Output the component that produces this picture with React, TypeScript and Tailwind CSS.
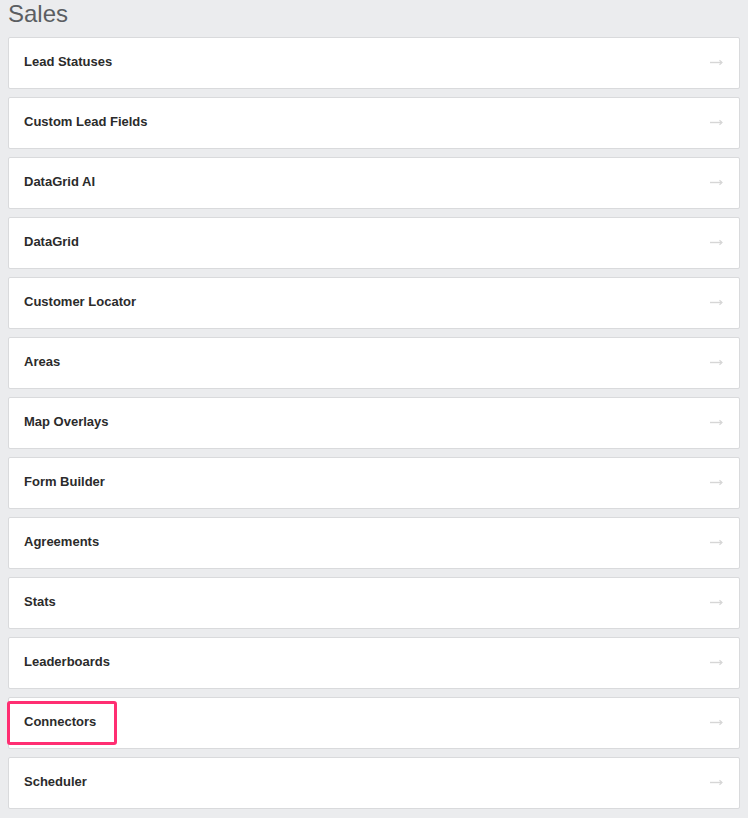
const items = [
  'Lead Statuses',
  'Custom Lead Fields',
  'DataGrid AI',
  'DataGrid',
  'Customer Locator',
  'Areas',
  'Map Overlays',
  'Form Builder',
  'Agreements',
  'Stats',
  'Leaderboards',
  'Connectors',
  'Scheduler',
]

const Arrow = () => (
  <svg width="13" height="7" viewBox="0 0 13 7" fill="none" className="text-[#d6d6d6]">
    <path d="M0 3.5H11.5" stroke="currentColor" strokeWidth="1.4" />
    <path d="M9.5 1.2L12 3.5L9.5 5.8" stroke="currentColor" strokeWidth="1.2" />
  </svg>
)

const App = () => {
  return (
    <div
      className="min-h-screen bg-[#ebecee] px-2 pb-2"
      style={{ fontFamily: '"Liberation Sans", Arial, sans-serif' }}
    >
      <h1 className="text-[24px] leading-[28px] text-[#5b5e62] mb-[9px]">Sales</h1>
      <div className="flex flex-col gap-2">
        {items.map((name) => (
          <div
            key={name}
            className="relative flex items-center justify-between h-[52px] bg-white border border-[#d9dadc] rounded-[2px] pl-[15px] pr-[16px] pb-[2px]"
          >
            <span className="text-[13px] font-bold text-[#2b2b2b]">{name}</span>
            <Arrow />
            {name === 'Connectors' && (
              <div className="absolute left-[-2px] top-[3px] w-[110px] h-[44px] border-[3px] border-[#ff2e72] rounded-[3px]" />
            )}
          </div>
        ))}
      </div>
    </div>
  )
}

export default App
